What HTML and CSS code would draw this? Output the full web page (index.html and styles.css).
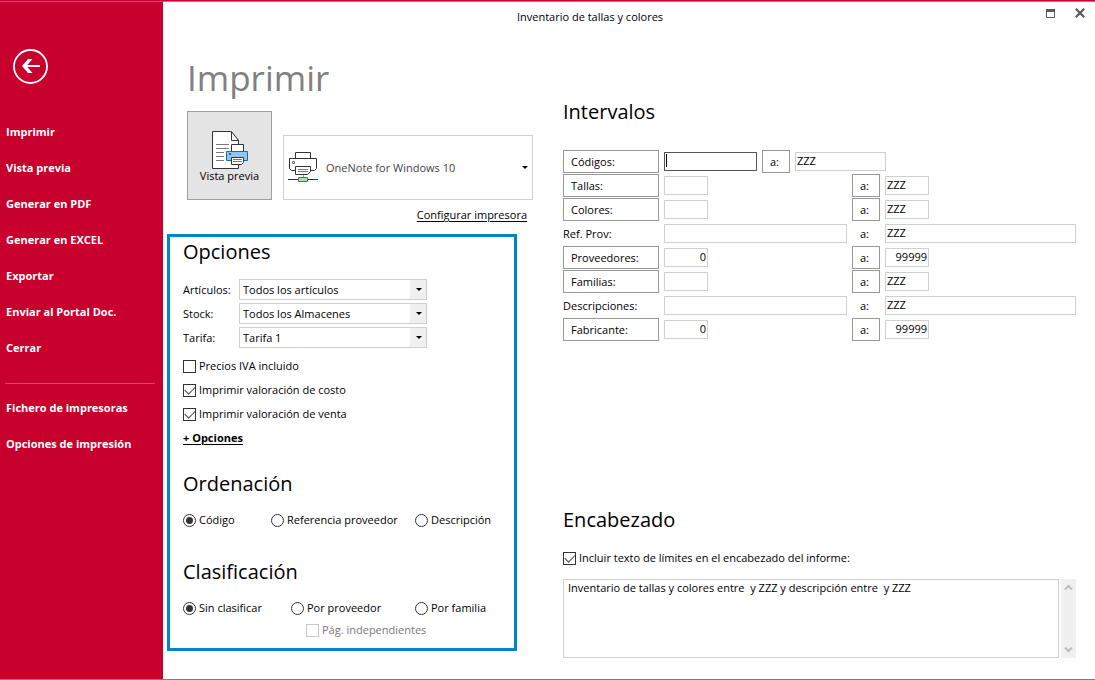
FILE: index.html
```html
<!DOCTYPE html>
<html lang="es">
<head>
<meta charset="utf-8">
<meta name="viewport" content="width=device-width, initial-scale=1">
<title>Inventario de tallas y colores</title>
<link rel="stylesheet" href="styles.css">
</head>
<body>
<div class="window">
  <nav class="sidebar" aria-label="Menú">
    <button class="back" type="button" aria-label="Volver">
      <svg width="36" height="36" viewBox="0 0 36 36" fill="none" stroke="#fff">
        <circle cx="17.500" cy="17.500" r="16.500" stroke-width="1.8"/>
        <path d="M11 17H27" stroke-width="2"/>
        <path d="M9 17l6-7h4.500l-6 7 6 7H15z" fill="#fff" stroke="none"/>
      </svg>
    </button>
    <ul class="menu">
      <li><a href="#">Imprimir</a></li>
      <li><a href="#">Vista previa</a></li>
      <li><a href="#">Generar en PDF</a></li>
      <li><a href="#">Generar en EXCEL</a></li>
      <li><a href="#">Exportar</a></li>
      <li><a href="#">Enviar al Portal Doc.</a></li>
      <li><a href="#">Cerrar</a></li>
    </ul>
    <ul class="menu menu-extra">
      <li><a href="#">Fichero de impresoras</a></li>
      <li><a href="#">Opciones de impresión</a></li>
    </ul>
  </nav>

  <div class="content">
    <header class="titlebar">
      <span class="title">Inventario de tallas y colores</span>
      <div class="window-buttons">
        <button type="button" aria-label="Maximizar">
          <svg width="10" height="10" viewBox="0 0 10 10"><path d="M1.500 2.500h8v7h-8z" fill="none" stroke="#5a5a5a"/><path d="M1 1h9v3H1z" fill="#5a5a5a"/></svg>
        </button>
        <button type="button" aria-label="Cerrar">
          <svg width="10" height="10" viewBox="0 0 10 10"><path d="M.8.8l8.4 8.4M9.2.8L.8 9.2" fill="none" stroke="#5a5a5a" stroke-width="2.2"/></svg>
        </button>
      </div>
    </header>

    <main class="panes">
      <div class="pane-left">
        <h1>Imprimir</h1>
        <div class="print-row">
          <button class="preview" type="button">
            <svg width="37" height="39" viewBox="0 0 37 39" fill="#fff" stroke="#333">
              <path d="M1.500.5h18l8 9v28h-26z"/>
              <path d="M20.500.5v9h7z"/>
              <path d="M5 13.500h13M5 17.500h13M5 21.500h8M5 25.500h8M5 29.500h8" stroke="#777"/>
              <path d="M20.500 13.500h12v8h-12z"/>
              <path d="M15.500 20.500h21v9h-21z" fill="#92c5f0" stroke="#0f6cb8"/>
              <path d="M18 22h2v2h-2z" fill="#0f6cb8" stroke="none"/>
              <path d="M20.500 26.500h12v5l-2 2h-10z"/>
              <path d="M22 28.500h9M22 30.500h9" stroke="#777"/>
            </svg>
            <span>Vista previa</span>
          </button>
          <div class="printer">
            <svg class="printer-icon" width="30" height="31" viewBox="0 0 30 31" fill="#fff" stroke="#333">
              <path d="M7.500.5h15v6h-15z"/>
              <path d="M1.500 6.500h27v10l-2 2h-23l-2-2z"/>
              <path d="M4.500 9.500h2v2h-2z" stroke="#777"/>
              <path d="M7.500 14.500h15v5l-3 3h-12z"/>
              <path d="M10 17.500h10M10 19.500h10" stroke="#777"/>
              <path d="M15.500 23v3" stroke="#aaa"/>
              <path d="M0 27.500h30"/>
              <path d="M10.500 25.500h9v4h-9z" fill="#b5dcb9" stroke="#169b45"/>
            </svg>
            <select class="printer-select" aria-label="Impresora"><option>OneNote for Windows 10</option></select>
          </div>
        </div>
        <a class="configure" href="#">Configurar impresora</a>

        <div class="options">
          <section>
            <h2>Opciones</h2>
            <div class="selects">
              <label for="articulos">Artículos:</label>
              <div class="combo"><select id="articulos"><option>Todos los artículos</option></select></div>
              <label for="stock">Stock:</label>
              <div class="combo"><select id="stock"><option>Todos los Almacenes</option></select></div>
              <label for="tarifa">Tarifa:</label>
              <div class="combo"><select id="tarifa"><option>Tarifa 1</option></select></div>
            </div>
            <div class="checks">
              <label class="choice"><input type="checkbox">Precios IVA incluido</label>
              <label class="choice"><input type="checkbox" checked>Imprimir valoración de costo</label>
              <label class="choice"><input type="checkbox" checked>Imprimir valoración de venta</label>
              <a class="more" href="#">+ Opciones</a>
            </div>
          </section>
          <section class="sorting">
            <h2>Ordenación</h2>
            <div class="radios">
              <label class="choice"><input type="radio" name="orden" checked>Código</label>
              <label class="choice"><input type="radio" name="orden">Referencia proveedor</label>
              <label class="choice"><input type="radio" name="orden">Descripción</label>
            </div>
          </section>
          <section class="grouping">
            <h2>Clasificación</h2>
            <div class="radios radios-grouping">
              <label class="choice"><input type="radio" name="clase" checked>Sin clasificar</label>
              <label class="choice"><input type="radio" name="clase">Por proveedor</label>
              <label class="choice"><input type="radio" name="clase">Por familia</label>
            </div>
            <label class="choice choice-disabled"><input type="checkbox" disabled>Pág. independientes</label>
          </section>
        </div>
      </div>

      <div class="pane-right">
        <section>
          <h2>Intervalos</h2>
          <div class="ranges">
            <div class="range range-codes">
              <button type="button">Códigos:</button>
              <input class="field code-from" type="text" aria-label="Códigos desde">
              <button type="button">a:</button>
              <input class="field" type="text" value="ZZZ" aria-label="Códigos hasta">
            </div>
            <div class="range">
              <button type="button">Tallas:</button>
              <input class="field short" type="text" aria-label="Tallas desde">
              <button type="button">a:</button>
              <input class="field short" type="text" value="ZZZ" aria-label="Tallas hasta">
            </div>
            <div class="range">
              <button type="button">Colores:</button>
              <input class="field short" type="text" aria-label="Colores desde">
              <button type="button">a:</button>
              <input class="field short" type="text" value="ZZZ" aria-label="Colores hasta">
            </div>
            <div class="range">
              <label for="ref-desde">Ref. Prov:</label>
              <input class="field" id="ref-desde" type="text">
              <label class="to" for="ref-hasta">a:</label>
              <input class="field" id="ref-hasta" type="text" value="ZZZ">
            </div>
            <div class="range">
              <button type="button">Proveedores:</button>
              <input class="field short number" type="text" value="0" aria-label="Proveedores desde">
              <button type="button">a:</button>
              <input class="field short number" type="text" value="99999" aria-label="Proveedores hasta">
            </div>
            <div class="range">
              <button type="button">Familias:</button>
              <input class="field short" type="text" aria-label="Familias desde">
              <button type="button">a:</button>
              <input class="field short" type="text" value="ZZZ" aria-label="Familias hasta">
            </div>
            <div class="range">
              <label for="desc-desde">Descripciones:</label>
              <input class="field" id="desc-desde" type="text">
              <label class="to" for="desc-hasta">a:</label>
              <input class="field" id="desc-hasta" type="text" value="ZZZ">
            </div>
            <div class="range">
              <button type="button">Fabricante:</button>
              <input class="field short number" type="text" value="0" aria-label="Fabricante desde">
              <button type="button">a:</button>
              <input class="field short number" type="text" value="99999" aria-label="Fabricante hasta">
            </div>
          </div>
        </section>

        <section class="heading-text">
          <h2>Encabezado</h2>
          <label class="choice"><input type="checkbox" checked>Incluir texto de límites en el encabezado del informe:</label>
          <div class="memo">
            <textarea aria-label="Texto del encabezado">Inventario de tallas y colores entre  y ZZZ y descripción entre  y ZZZ</textarea>
            <div class="scroll">
              <button type="button" aria-label="Subir"><svg width="9" height="7" viewBox="0 0 9 7" fill="none" stroke="#bdbdbd" stroke-width="2"><path d="M1 5.500l3.500-3.500L8 5.500"/></svg></button>
              <button type="button" aria-label="Bajar"><svg width="9" height="7" viewBox="0 0 9 7" fill="none" stroke="#bdbdbd" stroke-width="2"><path d="M1 1.500l3.500 3.500L8 1.500"/></svg></button>
            </div>
          </div>
        </section>
      </div>
    </main>
  </div>
</div>
</body>
</html>
```

FILE: styles.css
```css
* {
  box-sizing: border-box;
}

body {
  margin: 0;
  font: 11px/16px "Open Sans", "Noto Sans", sans-serif;
  color: #000;
  background: #fff;
}

button,
input,
select,
textarea {
  margin: 0;
  font: inherit;
  color: inherit;
  border-radius: 0;
}

h1,
h2 {
  margin: 0;
  font-weight: 400;
}

h1 {
  padding-left: 20px;
  font-size: 35px;
  line-height: 48px;
  color: #808080;
}

h2 {
  font-size: 20px;
  line-height: 28px;
}

a {
  color: inherit;
}

.window {
  display: flex;
  min-height: 100vh;
  border-top: 1px solid #c8002d;
  border-bottom: 1px solid #7f7f7f;
}

.sidebar {
  flex: none;
  width: 163px;
  padding-top: 47px;
  border-top: 1px solid #8f6f75;
  background: #c8002d;
  color: #fff;
}

.back {
  display: block;
  margin-left: 13px;
  padding: 0;
  border: 0;
  background: none;
}

.back svg {
  display: block;
}

.menu {
  margin: 29px 0 0;
  padding: 0;
  list-style: none;
  line-height: 36px;
  font-weight: 700;
}

.menu a {
  display: block;
  padding-left: 6px;
  text-decoration: none;
}

.menu-extra {
  margin: 17px 8px 0 5px;
  padding-top: 6px;
  border-top: 1px solid #dc4563;
}

.menu-extra a {
  padding-left: 1px;
}

.content {
  flex: 1;
  min-width: 0;
  display: flex;
  flex-direction: column;
  border-top: 1px solid #8a8a8a;
}

.titlebar {
  display: flex;
  height: 30px;
}

.title {
  flex: 1;
  line-height: 30px;
  text-align: center;
}

.window-buttons {
  display: flex;
  gap: 10px;
  width: 78px;
  padding: 2px 5px 0 23px;
}

.window-buttons button {
  width: 20px;
  height: 18px;
  padding: 0;
  border: 0;
  background: none;
}

.window-buttons svg {
  display: block;
  margin: 0 auto;
}

.panes {
  flex: 1;
  display: grid;
  grid-template-columns: 366px minmax(0, 1fr);
  gap: 30px;
  padding: 22px 19px 21px 4px;
}

.print-row {
  display: flex;
  align-items: flex-end;
  gap: 11px;
  margin-top: 9px;
  padding-left: 20px;
}

.preview {
  display: flex;
  flex-direction: column;
  align-items: center;
  width: 85px;
  height: 89px;
  padding: 19px 0 0;
  border: 1px solid #a0a0a0;
  background: #e4e4e4;
}

.preview span {
  line-height: 12px;
}

.printer {
  position: relative;
  flex: 1;
}

.printer-icon {
  position: absolute;
  left: 5px;
  top: 17px;
}

.printer-select {
  display: block;
  appearance: none;
  width: 100%;
  height: 65px;
  padding: 0 20px 0 42px;
  border: 1px solid #d0d0d0;
  background: transparent;
  color: #444;
}

.printer::after,
.combo::after {
  content: "";
  position: absolute;
  right: 5px;
  top: 31px;
  border: 3px solid transparent;
  border-top-color: #000;
  border-bottom: 0;
  pointer-events: none;
}

.configure {
  display: block;
  margin: 7px 6px 0 0;
  text-align: right;
  text-underline-offset: 2px;
}

.options {
  width: 350px;
  margin-top: 11px;
  padding: 1px 13px 10px;
  border: 3px solid #0084cd;
}

.selects {
  display: grid;
  grid-template-columns: 56px 188px;
  gap: 3px 0;
  align-items: center;
  margin-top: 13px;
}

.combo {
  position: relative;
}

.combo select {
  display: block;
  appearance: none;
  width: 100%;
  height: 21px;
  padding: 0 20px 0 3px;
  border: 1px solid #d0d0d0;
  background: linear-gradient(#f0f0f0, #f0f0f0) right / 16px 100% no-repeat #fff;
}

.combo::after {
  top: 9px;
}

.checks {
  display: grid;
  gap: 8px;
  justify-items: start;
  margin-top: 10px;
}

.more {
  font-weight: 700;
  text-underline-offset: 2px;
}

.choice {
  display: flex;
  align-items: center;
  gap: 3px;
  white-space: nowrap;
}

.choice input {
  appearance: none;
  display: grid;
  place-items: center;
  flex: none;
  width: 13px;
  height: 13px;
  border: 1px solid #333;
  background: #fff;
}

.choice input[type="radio"] {
  border-radius: 50%;
}

.choice input[type="radio"]:checked::before {
  content: "";
  width: 7px;
  height: 7px;
  border-radius: 50%;
  background: #333;
}

.choice input[type="checkbox"]:checked::before {
  content: "";
  width: 9px;
  height: 5px;
  margin-bottom: 3px;
  border: solid #444;
  border-width: 0 0 1px 1px;
  transform: rotate(-45deg);
}

.choice-disabled {
  margin: 6px 0 0 123px;
  color: #777;
}

.choice-disabled input {
  border-color: #c8c8c8;
}

.sorting {
  margin-top: 24px;
}

.grouping {
  margin-top: 30px;
}

.radios {
  display: grid;
  grid-template-columns: 88px 144px auto;
  margin-top: 14px;
}

.radios-grouping {
  grid-template-columns: 108px 124px auto;
}

.pane-right {
  display: flex;
  flex-direction: column;
  justify-content: space-between;
  padding-top: 44px;
}

.ranges {
  display: grid;
  gap: 1px;
  margin-top: 24px;
}

.range {
  display: grid;
  grid-template-columns: 96px minmax(0, 183fr) 28px minmax(0, 191fr);
  gap: 5px;
  align-items: center;
  min-height: 23px;
}

.range-codes {
  grid-template-columns: 96px 93px 28px 91px;
}

.range button {
  height: 23px;
  padding: 0 7px;
  border: 1px solid #999;
  background: #fff;
  text-align: left;
}

.to {
  padding-left: 8px;
}

.field {
  width: 100%;
  height: 19px;
  padding: 0 1px 2px;
  border: 1px solid #d0d0d0;
  background: #fff;
  outline: 0;
}

.code-from {
  border-color: #555;
  background: linear-gradient(#000, #000) 1px 1px / 1px 13px no-repeat #fff;
  caret-color: transparent;
}

.short {
  width: 44px;
}

.number {
  text-align: right;
}

.heading-text .choice {
  margin-top: 16px;
}

.memo {
  display: flex;
  gap: 2px;
  margin-top: 13px;
}

.memo textarea {
  flex: 1;
  min-width: 0;
  height: 79px;
  padding: 0 4px;
  border: 1px solid #d0d0d0;
  resize: none;
  overflow: hidden;
  outline: 0;
}

.scroll {
  display: flex;
  flex-direction: column;
  justify-content: space-between;
  width: 15px;
  background: #f0f0f0;
}

.scroll button {
  display: grid;
  place-items: center;
  height: 17px;
  padding: 0;
  border: 0;
  background: none;
}
```
